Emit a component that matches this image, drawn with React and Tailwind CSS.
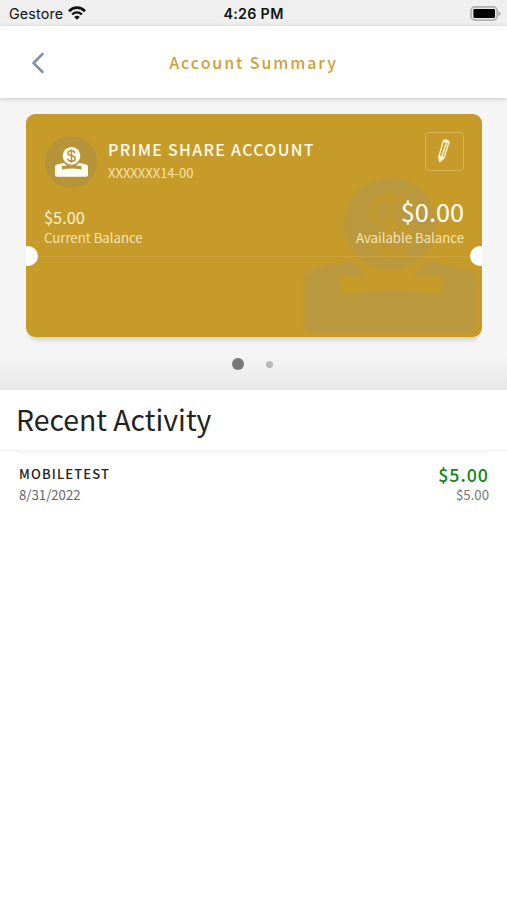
import { ChevronLeft } from 'lucide-react';

const ShareIcon = ({ className, fill, cut }) => (
  <svg viewBox="0 0 172 156" className={className} fill="none">
    <circle cx="86" cy="46" r="46" fill={fill} />
    <path
      d="M104 31C102 23 95 19 86 19C75 19 68 25 68 33C68 41 75 44 86 46C97 48 105 52 105 61C105 69 97 74 86 74C75 74 68 69 66 61M86 11V82"
      stroke={cut}
      strokeWidth="8"
    />
    <path
      d="M10 91L42 83L50 84Q55 93 64 98H36V117Q86 108 138 117V98H108Q117 93 122 84L130 83L162 91Q172 94 172 102V144Q172 155 161 155H11Q0 155 0 144V102Q0 94 10 91Z"
      fill={fill}
    />
  </svg>
);

const WifiIcon = () => (
  <svg viewBox="0 0 18 14" className="-mt-px w-[18px] h-[14px]" fill="none">
    <path d="M1 5.2C5.6.5 12.4.5 17 5.2" stroke="#111" strokeWidth="2.7" />
    <path d="M4.1 8.5C7 5.7 11 5.7 13.9 8.5" stroke="#111" strokeWidth="2.4" />
    <path d="M6.2 11Q9 8.7 11.8 11L9 13.8Z" fill="#111" />
  </svg>
);

const BatteryIcon = () => (
  <svg viewBox="0 0 31 15" className="-mt-px w-[31px] h-[15px]">
    <rect x="1" y="0.9" width="26.2" height="13.2" rx="4" fill="#e8e8e8" stroke="#b0b0b0" strokeWidth="1.6" />
    <rect x="3.4" y="3" width="21.6" height="9" rx="1.2" fill="#000" />
    <path d="M28.4 5Q30.7 6 30.7 7.5T28.4 10Z" fill="#aaa" />
  </svg>
);

const PencilIcon = () => (
  <svg viewBox="0 0 12 24" className="-mt-[2px] -ml-px w-3 h-6" fill="none" stroke="#fff4d4" strokeWidth="1.4" strokeLinejoin="round">
    <path d="M5.2 2.4Q5.6 1 7 1.2L9.8 1.8Q11.2 2.3 10.8 3.7L6 18.8L1.8 22.6L1 17.2Z" />
    <path d="M8.2 4.2L3.6 18" />
    <path d="M1 17.2L6 18.8L1.8 22.6ZM5.2 2.4L7 1.2L9.8 1.8L10.8 3.7Z" fill="#fff4d4" />
  </svg>
);

const StatusBar = () => (
  <div className="grid grid-cols-3 items-center h-[26px] pt-px pl-[9px] pr-[6px] bg-[#efefef] font-['Inter',sans-serif] text-[14.3px] text-[#111]">
    <div className="flex items-center gap-[5px]">
      <span className="tracking-[0.15px]">Gestore</span>
      <WifiIcon />
    </div>
    <span className="-ml-[3px] text-center font-semibold tracking-[0.3px]">4:26 PM</span>
    <div className="flex justify-end">
      <BatteryIcon />
    </div>
  </div>
);

const Header = () => (
  <header className="relative z-10 grid grid-cols-[60px_1fr_60px] items-center h-[72px] bg-white shadow-[0_1px_5px_rgba(0,0,0,0.18)]">
    <button className="flex pt-[2px] pl-5">
      <ChevronLeft className="w-9 h-9 text-[#8592a3]" strokeWidth={1.7} />
    </button>
    <h1 className="pb-px text-center text-[16px] leading-6 font-medium tracking-[1.9px] text-[#d0a038]">Account Summary</h1>
  </header>
);

const AccountCard = () => (
  <div className="relative h-[223px] rounded-[9px] overflow-hidden bg-[#c79b2a] text-[#fff3d0]">
    <ShareIcon
      className="absolute left-[278px] top-[64px] w-[173px] h-[156px] blur-[1.5px]"
      fill="#ba983e"
      cut="#c1992f"
    />
    <div className="relative flex items-start pt-[18px] pl-[19px] pr-[18px] h-[85px]">
      <div className="flex justify-center items-center mt-1 w-[52px] h-[52px] rounded-full bg-[#b79439]">
        <ShareIcon className="w-[33px] h-[30px]" fill="#fffdf6" cut="#b79439" />
      </div>
      <div className="flex-1 pt-[5px] pl-[11px]">
        <h2 className="text-[16px] leading-6 font-medium tracking-[1.3px] text-[#fffaf0]">PRIME SHARE ACCOUNT</h2>
        <p className="mt-[2px] text-[13px] leading-5 text-[#f7e2ad]">XXXXXXX14-00</p>
      </div>
      <button className="flex justify-center items-center w-[39px] h-[39px] rounded-[4px] border border-[#d8b456]">
        <PencilIcon />
      </button>
    </div>
    <div className="relative flex justify-between items-end pb-px pl-[18px] pr-[18px] h-[50px]">
      <div>
        <p className="text-[16.4px] leading-[22px]">$5.00</p>
        <p className="text-[13.2px] leading-5 text-[#f7e4b4]">Current Balance</p>
      </div>
      <div className="text-right">
        <p className="pb-[2px] text-[25.3px] leading-[30px] text-white">$0.00</p>
        <p className="text-[13.2px] leading-5 text-[#f7e4b4]">Available Balance</p>
      </div>
    </div>
    <div className="relative flex items-center justify-between -mx-2 mt-[-3px] h-5">
      <span className="w-5 h-5 rounded-full bg-white" />
      <span className="flex-1 h-px bg-[#cca13b]" />
      <span className="w-5 h-5 rounded-full bg-white" />
    </div>
  </div>
);

const Activity = ({ name, date, amount, balance }) => (
  <li className="flex justify-between pt-[9px] pl-[19px] pr-[18px]">
    <div>
      <p className="text-[13px] leading-6 font-medium tracking-[1.15px] text-[#222]">{name}</p>
      <p className="-mt-px text-[13.2px] leading-5 text-[#666]">{date}</p>
    </div>
    <div className="text-right">
      <p className="text-[17.8px] leading-6 font-medium tracking-[1px] text-[#138413]">{amount}</p>
      <p className="-mt-px text-[13.2px] leading-5 text-[#777]">{balance}</p>
    </div>
  </li>
);

const App = () => {
  return (
    <div className="w-[507px] h-[900px] overflow-hidden bg-white font-['Noto_Sans_CJK_SC',sans-serif]">
      <StatusBar />
      <Header />
      <section className="h-[292px] pt-4 pl-[26px] pr-[25px] bg-linear-to-b from-[#f5f5f5] from-88% to-[#e7e7e7]">
        <div className="rounded-[9px] shadow-[0_8px_5px_-5px_rgba(0,0,0,0.16)]">
          <AccountCard />
        </div>
        <div className="flex items-center pt-[21px] pl-[206px] gap-[22px]">
          <span className="w-3 h-3 rounded-full bg-[#777]" />
          <span className="w-[7px] h-[7px] rounded-full bg-[#b7b7b7]" />
        </div>
      </section>
      <h2 className="h-[61px] pt-[7px] pl-4 border-b border-[#f0f0f0] text-[28.4px] leading-[44px] text-[#222]">Recent Activity</h2>
      <div className="mx-[18px] h-px mt-px bg-[#f1f1f1]" />
      <ul>
        <Activity name="MOBILETEST" date="8/31/2022" amount="$5.00" balance="$5.00" />
      </ul>
    </div>
  );
};

export default App;
